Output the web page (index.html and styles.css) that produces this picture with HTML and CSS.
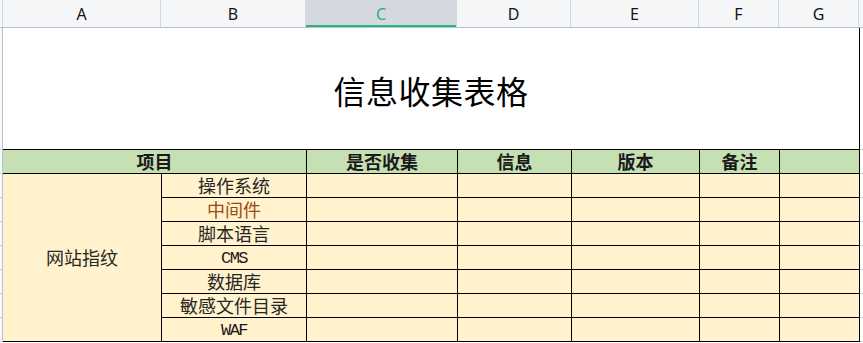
FILE: index.html
```html
<!DOCTYPE html>
<html lang="zh-CN">
<head>
    <meta charset="UTF-8">
    <meta name="viewport" content="width=device-width, initial-scale=1.0">
    <title>信息收集表格</title>
    <link rel="stylesheet" href="styles.css">
</head>
<body>

    <div class="sheet">
        <!-- intestazione colonne -->
        <div class="col-heads">
            <div class="corner"></div>
            <div class="col-head">A</div>
            <div class="col-head">B</div>
            <div class="col-head active">C</div>
            <div class="col-head">D</div>
            <div class="col-head">E</div>
            <div class="col-head">F</div>
            <div class="col-head">G</div>
            <div class="col-head tail"></div>
        </div>

        <div class="body">
            <div class="row-heads">
                <div class="rh first"></div>
                <div class="rh"></div>
                <div class="rh"></div>
                <div class="rh"></div>
                <div class="rh"></div>
                <div class="rh"></div>
                <div class="rh"></div>
                <div class="rh"></div>
                <div class="rh"></div>
            </div>

            <div class="content">
                <div class="title">信息收集表格</div>

                <div class="grid">
                    <div class="cell head span2">项目</div>
                    <div class="cell head">是否收集</div>
                    <div class="cell head">信息</div>
                    <div class="cell head">版本</div>
                    <div class="cell head">备注</div>
                    <div class="cell head"></div>

                    <div class="cell group">网站指纹</div>

                    <div class="cell">操作系统</div>
                    <div class="cell"></div><div class="cell"></div><div class="cell"></div><div class="cell"></div><div class="cell"></div>

                    <div class="cell orange">中间件</div>
                    <div class="cell"></div><div class="cell"></div><div class="cell"></div><div class="cell"></div><div class="cell"></div>

                    <div class="cell">脚本语言</div>
                    <div class="cell"></div><div class="cell"></div><div class="cell"></div><div class="cell"></div><div class="cell"></div>

                    <div class="cell"><span class="latin">CMS</span></div>
                    <div class="cell"></div><div class="cell"></div><div class="cell"></div><div class="cell"></div><div class="cell"></div>

                    <div class="cell">数据库</div>
                    <div class="cell"></div><div class="cell"></div><div class="cell"></div><div class="cell"></div><div class="cell"></div>

                    <div class="cell">敏感文件目录</div>
                    <div class="cell"></div><div class="cell"></div><div class="cell"></div><div class="cell"></div><div class="cell"></div>

                    <div class="cell"><span class="latin">WAF</span></div>
                    <div class="cell"></div><div class="cell"></div><div class="cell"></div><div class="cell"></div><div class="cell"></div>
                </div>
            </div>

            <div class="row-heads tail">
                <div class="rh first"></div>
                <div class="rh"></div>
                <div class="rh"></div>
                <div class="rh"></div>
                <div class="rh"></div>
                <div class="rh"></div>
                <div class="rh"></div>
                <div class="rh"></div>
                <div class="rh"></div>
            </div>
        </div>
    </div>

</body>
</html>
```

FILE: styles.css
```css
body {
    margin: 0;
    background: #ffffff;
    font-family: "Noto Sans CJK SC", sans-serif;
    overflow: hidden;
}

.sheet {
    width: 863px;
    height: 343px;
}

/* barra lettere colonne */
.col-heads {
    display: grid;
    grid-template-columns: 3px 158px 145px 151px 114px 128px 80px 80px 4px;
    height: 28px;
    background: #f5f6f8;
    border-bottom: 1px solid #b9c0d3;
    box-sizing: border-box;
}

.corner {
    border-right: 1px solid #d3d7df;
}

.col-head {
    display: flex;
    justify-content: center;
    align-items: center;
    font-family: "Noto Sans", sans-serif;
    font-size: 16px;
    color: #141414;
    border-right: 1px solid #d3d7df;
}

.col-head.active {
    background: #d5d8df;
    color: #27b27a;
    box-shadow: inset 0 -2px 0 #27b27a;
}

.col-head.tail {
    border-right: none;
}

.body {
    display: grid;
    grid-template-columns: 3px 857px 3px;
}

/* numeri riga (solo il bordo si vede) */
.row-heads {
    display: flex;
    flex-direction: column;
    background: #f7f8fa;
    border-right: 1px solid #b9c0d3;
}

.row-heads.tail {
    background: #ffffff;
    border-right: none;
}

.rh {
    height: 24px;
    border-bottom: 1px solid #ccd1dc;
    box-sizing: border-box;
}

.rh.first {
    height: 122px;
}

.title {
    height: 121px;
    box-sizing: border-box;
    padding-top: 3px;
    border-right: 1px solid #000;
    display: flex;
    justify-content: center;
    align-items: center;
    font-size: 32px;
    letter-spacing: 0.5px;
    color: #000;
}

.grid {
    display: grid;
    grid-template-columns: 158px 144px 150px 113px 127px 79px 79px;
    grid-auto-rows: 23px;
    gap: 1px;
    background: #000;
    padding: 1px 1px 1px 0;
}

.cell {
    background: #fff2cc;
    display: flex;
    justify-content: center;
    align-items: center;
    font-size: 18px;
    line-height: 23px;
    color: #262626;
}

.cell.head {
    background: #c6e0b4;
    font-weight: bold;
    color: #1a1a1a;
}

.span2 {
    grid-column: span 2;
}

.group {
    grid-row: span 7;
}

.orange {
    color: #9a4b12;
}

.latin {
    font-family: "Liberation Mono", monospace;
    font-size: 17px;
    letter-spacing: -1.5px;
    color: #1a1a1a;
    padding-top: 1px;
}
```
